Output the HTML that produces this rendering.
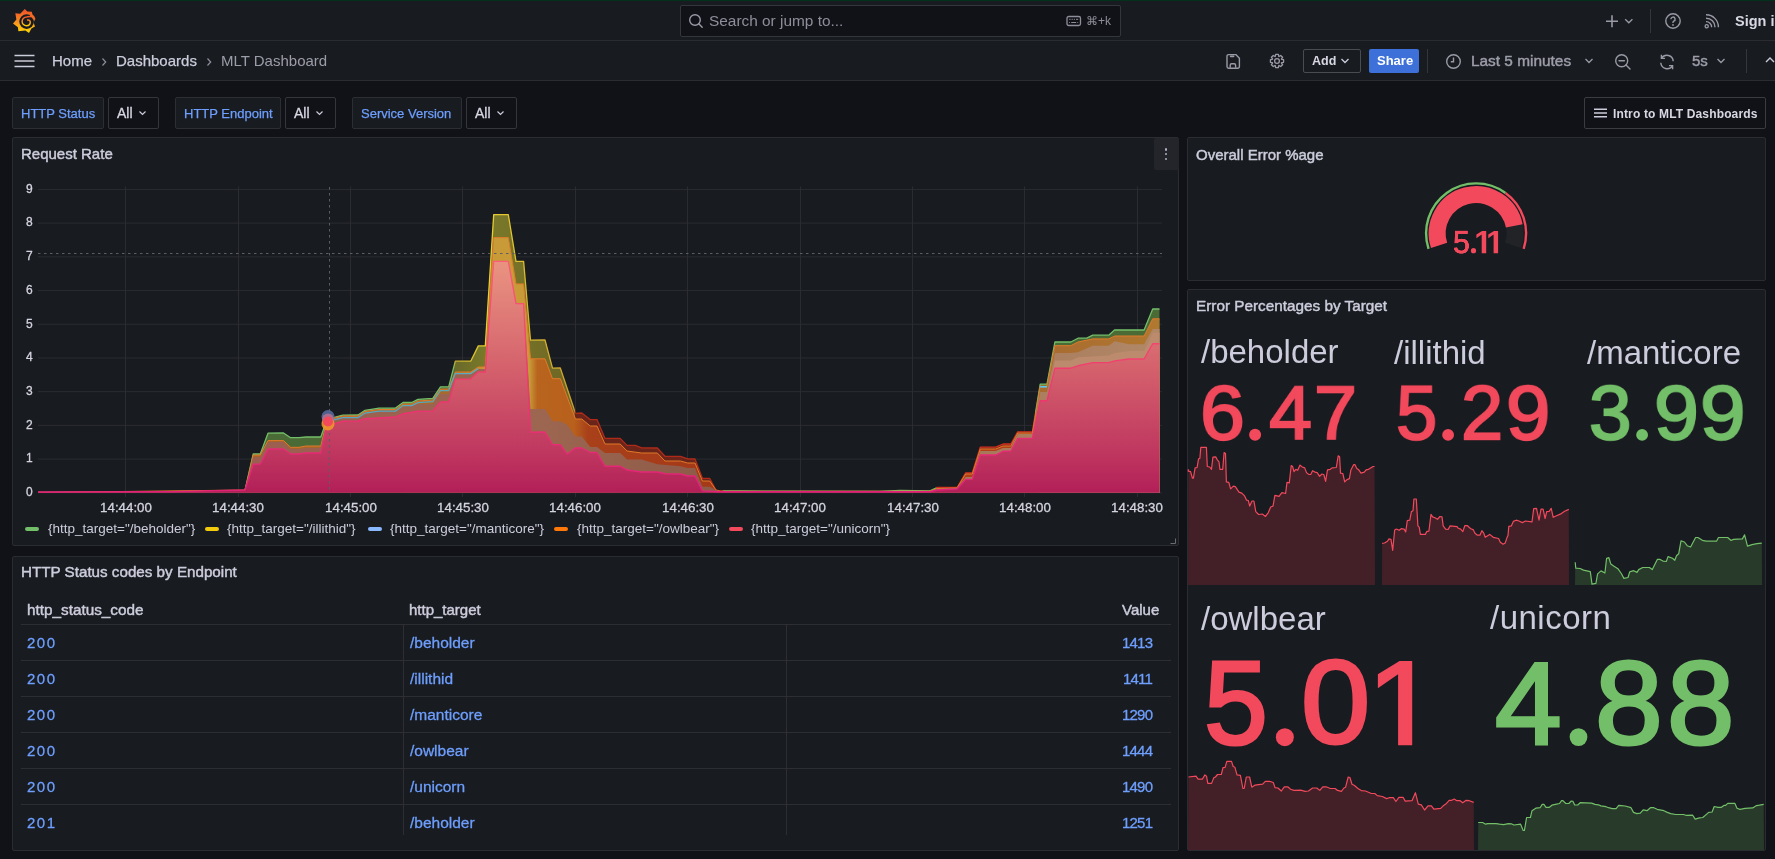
<!DOCTYPE html>
<html><head><meta charset="utf-8"><style>
html,body{margin:0;padding:0;width:1775px;height:859px;overflow:hidden;background:#111217;font-family:"Liberation Sans",sans-serif}
.t{position:absolute;line-height:1;white-space:nowrap;will-change:transform}
</style></head><body>
<div style="position:absolute;left:0px;top:0px;width:1775px;height:40px;background:#181b1f"></div>
<div style="position:absolute;left:0px;top:0px;width:1775px;height:1px;background:#03301a"></div>
<div style="position:absolute;left:0px;top:40px;width:1775px;height:1px;background:#2a2c32"></div>
<div style="position:absolute;left:0px;top:41px;width:1775px;height:39px;background:#181b1f"></div>
<div style="position:absolute;left:0px;top:80px;width:1775px;height:1px;background:#2a2c32"></div>
<svg style="position:absolute;left:8px;top:4px" width="34" height="34" viewBox="0 0 34 34">
<defs><linearGradient id="lg" x1="0" y1="0" x2="0" y2="1"><stop offset="0.1" stop-color="#f05a28"/><stop offset="0.55" stop-color="#f7931e"/><stop offset="0.9" stop-color="#fbca0a"/></linearGradient></defs>
<path fill="url(#lg)" d="M16.8 5 L19.4 7.6 L23.9 7.8 L24.6 11.4 L26.9 15.5 L25.6 18.8 L27 22.4 L23.4 24.4 L21 29 L17.4 26.6 L10.4 27.2 L9.9 23.2 L5 19.5 L8.4 15.6 L7.3 9.2 L12.2 9.8 Z"/>
<circle cx="18.6" cy="17.6" r="7.3" fill="#181b1f"/>
<path d="M25.6 14.2 C24.5 11.6 21.8 12.4 18.6 12.9 A4.5 4.5 0 0 0 14.1 17.4 A4.4 4.4 0 0 0 18.6 21.8 A3.9 3.9 0 0 0 22.3 18 A2.2 2.2 0 0 0 19.6 16" fill="none" stroke="url(#lg)" stroke-width="1.45" stroke-linecap="round"/>
<path d="M22.5 10.6 A7.6 7.6 0 0 1 26.4 15.5" fill="none" stroke="#f26a24" stroke-width="2.4"/>
</svg>
<div style="position:absolute;left:680px;top:5px;width:441px;height:32px;background:#111217;border:1px solid #34363c;border-radius:2px;box-sizing:border-box"></div>
<svg style="position:absolute;left:688px;top:13px" width="16" height="16" viewBox="0 0 16 16"><circle cx="7" cy="7" r="5.3" fill="none" stroke="#9a9aa6" stroke-width="1.4"/><path d="M10.8 10.8 L14.2 14.2" stroke="#9a9aa6" stroke-width="1.4" stroke-linecap="round"/></svg>
<div class="t" style="left:709.0px;top:13.1px;font-size:15.4px;color:#8e8e9a;font-weight:400;letter-spacing:0px;">Search or jump to...</div>
<svg style="position:absolute;left:1066px;top:15px" width="16" height="12" viewBox="0 0 16 12"><rect x="1" y="1.5" width="13.5" height="9" rx="1.8" fill="none" stroke="#8e8e9a" stroke-width="1.3"/><path d="M3.2 4.3h1.4M5.6 4.3h1.2M7.8 4.3h1.2M10 4.3h2.2M3.2 7.5h0.8M5.2 7.5h5M11.4 7.5h0.8" stroke="#8e8e9a" stroke-width="1"/></svg>
<div class="t" style="left:1086.0px;top:15.3px;font-size:12px;color:#8e8e9a;font-weight:400;letter-spacing:0px;">&#8984;+k</div>
<svg style="position:absolute;left:1604px;top:13px" width="32" height="16" viewBox="0 0 32 16"><path d="M8 2.2v12M2 8.2h12" stroke="#9a9aa6" stroke-width="1.6"/><path d="M21.2 6.2l3.6 3.6 3.6-3.6" fill="none" stroke="#9a9aa6" stroke-width="1.3"/></svg>
<div style="position:absolute;left:1650px;top:9px;width:1px;height:24px;background:#34363c"></div>
<svg style="position:absolute;left:1664px;top:12px" width="18" height="18" viewBox="0 0 18 18"><circle cx="9" cy="9" r="7.2" fill="none" stroke="#9a9aa6" stroke-width="1.4"/><path d="M6.9 7.2a2.1 2.1 0 1 1 2.9 1.9c-0.6 0.3-0.8 0.7-0.8 1.3v0.5" fill="none" stroke="#9a9aa6" stroke-width="1.4"/><circle cx="9" cy="12.9" r="0.9" fill="#9a9aa6"/></svg>
<svg style="position:absolute;left:1703px;top:13px" width="18" height="17" viewBox="0 0 18 17"><circle cx="3.7" cy="13.3" r="1.6" fill="none" stroke="#9a9aa6" stroke-width="1.3"/><path d="M3 8.6a5.4 5.4 0 0 1 5.6 5.6M3 5.2a8.8 8.8 0 0 1 9 9M3 1.8a12.2 12.2 0 0 1 12.4 12.4" fill="none" stroke="#9a9aa6" stroke-width="1.4"/></svg>
<div class="t" style="left:1735.0px;top:13.8px;font-size:14.5px;color:#d8d8e4;font-weight:700;letter-spacing:0px;">Sign in</div>
<svg style="position:absolute;left:14px;top:54px" width="21" height="14" viewBox="0 0 21 14"><path d="M0.5 1.5h20M0.5 7h20M0.5 12.5h20" stroke="#ccccdc" stroke-width="1.6"/></svg>
<div class="t" style="left:51.5px;top:53.3px;font-size:15px;color:#ccccdc;font-weight:400;letter-spacing:0px;-webkit-text-stroke:0.25px currentColor">Home</div>
<svg style="position:absolute;left:100px;top:57px" width="8" height="10" viewBox="0 0 8 10"><path d="M2.5 1.5l3.2 3.5-3.2 3.5" fill="none" stroke="#8e8e9a" stroke-width="1.2"/></svg>
<div class="t" style="left:115.5px;top:53.3px;font-size:15px;color:#ccccdc;font-weight:400;letter-spacing:0px;-webkit-text-stroke:0.25px currentColor">Dashboards</div>
<svg style="position:absolute;left:205px;top:57px" width="8" height="10" viewBox="0 0 8 10"><path d="M2.5 1.5l3.2 3.5-3.2 3.5" fill="none" stroke="#8e8e9a" stroke-width="1.2"/></svg>
<div class="t" style="left:220.5px;top:53.3px;font-size:15px;color:#9d9daa;font-weight:400;letter-spacing:0px;">MLT Dashboard</div>
<svg style="position:absolute;left:1224px;top:52px" width="18" height="18" viewBox="0 0 18 18"><path d="M3 4.2a1.6 1.6 0 0 1 1.6-1.6h7.2l3.6 3.6v8.4a1.6 1.6 0 0 1-1.6 1.6h-9.2a1.6 1.6 0 0 1-1.6-1.6z" fill="none" stroke="#9a9aa6" stroke-width="1.4" stroke-linejoin="round"/><path d="M6.2 15.8v-2.6a1.4 1.4 0 0 1 1.4-1.4h2.6a1.4 1.4 0 0 1 1.4 1.4v2.6" fill="none" stroke="#9a9aa6" stroke-width="1.4"/><path d="M6.6 4.4h3" stroke="#9a9aa6" stroke-width="1.6" stroke-linecap="round"/></svg>
<svg style="position:absolute;left:1268px;top:52px" width="18" height="18" viewBox="0 0 18 18"><path d="M7.27 4.41 L7.67 2.43 L10.33 2.43 L10.73 4.41 L11.02 4.54 L12.70 3.42 L14.58 5.30 L13.46 6.98 L13.59 7.27 L15.57 7.67 L15.57 10.33 L13.59 10.73 L13.46 11.02 L14.58 12.70 L12.70 14.58 L11.02 13.46 L10.73 13.59 L10.33 15.57 L7.67 15.57 L7.27 13.59 L6.98 13.46 L5.30 14.58 L3.42 12.70 L4.54 11.02 L4.41 10.73 L2.43 10.33 L2.43 7.67 L4.41 7.27 L4.54 6.98 L3.42 5.30 L5.30 3.42 L6.98 4.54 Z" fill="none" stroke="#9a9aa6" stroke-width="1.3" stroke-linejoin="round"/><circle cx="9" cy="9" r="2.4" fill="none" stroke="#9a9aa6" stroke-width="1.3"/></svg>
<div style="position:absolute;left:1303px;top:49px;width:58px;height:24px;border:1px solid #4a4c52;border-radius:2px;box-sizing:border-box"></div>
<div class="t" style="left:1311.5px;top:54.6px;font-size:12.5px;color:#d8d8e4;font-weight:700;letter-spacing:0px;">Add</div>
<svg style="position:absolute;left:1340px;top:57px" width="10" height="8" viewBox="0 0 10 8"><path d="M1.5 2l3.5 3.5 3.5-3.5" fill="none" stroke="#ccccdc" stroke-width="1.3"/></svg>
<div style="position:absolute;left:1369px;top:49px;width:50px;height:24px;background:#3d71d9;border-radius:2px"></div>
<div class="t" style="left:1376.5px;top:54.2px;font-size:13px;color:#ffffff;font-weight:700;letter-spacing:0px;">Share</div>
<div style="position:absolute;left:1427px;top:49px;width:1px;height:24px;background:#34363c"></div>
<svg style="position:absolute;left:1445px;top:53px" width="17" height="17" viewBox="0 0 17 17"><circle cx="8.5" cy="8.5" r="6.8" fill="none" stroke="#9a9aa6" stroke-width="1.4"/><path d="M8.5 4.5v4.2H5.8" fill="none" stroke="#9a9aa6" stroke-width="1.4"/></svg>
<div class="t" style="left:1470.5px;top:53.1px;font-size:15.4px;color:#9d9daa;font-weight:400;letter-spacing:0px;-webkit-text-stroke:0.45px currentColor">Last 5 minutes</div>
<svg style="position:absolute;left:1584px;top:57px" width="10" height="8" viewBox="0 0 10 8"><path d="M1.5 2l3.5 3.5 3.5-3.5" fill="none" stroke="#9a9aa6" stroke-width="1.3"/></svg>
<svg style="position:absolute;left:1614px;top:53px" width="18" height="18" viewBox="0 0 18 18"><circle cx="7.7" cy="7.7" r="6" fill="none" stroke="#9a9aa6" stroke-width="1.4"/><path d="M12 12l4 4M5 7.7h5.4" stroke="#9a9aa6" stroke-width="1.4" stroke-linecap="round"/></svg>
<svg style="position:absolute;left:1658px;top:53px" width="18" height="18" viewBox="0 0 18 18"><path d="M15.2 8.2A6.3 6.3 0 0 0 3.6 5.2M2.8 9.8a6.3 6.3 0 0 0 11.6 3" fill="none" stroke="#9a9aa6" stroke-width="1.4"/><path d="M3.4 1.8v3.6h3.6M14.6 16.2v-3.6H11" fill="none" stroke="#9a9aa6" stroke-width="1.4"/></svg>
<div class="t" style="left:1692.0px;top:53.4px;font-size:15px;color:#9d9daa;font-weight:400;letter-spacing:0px;-webkit-text-stroke:0.45px currentColor">5s</div>
<svg style="position:absolute;left:1716px;top:57px" width="10" height="8" viewBox="0 0 10 8"><path d="M1.5 2l3.5 3.5 3.5-3.5" fill="none" stroke="#9a9aa6" stroke-width="1.3"/></svg>
<div style="position:absolute;left:1746px;top:49px;width:1px;height:24px;background:#34363c"></div>
<svg style="position:absolute;left:1764px;top:55px" width="11" height="10" viewBox="0 0 11 10"><path d="M2 7l4-4 4 4" fill="none" stroke="#ccccdc" stroke-width="1.4"/></svg>
<div style="position:absolute;left:12px;top:97px;width:92px;height:32px;background:#181b1f;border:1px solid #2c2e34;border-radius:2px;box-sizing:border-box"></div>
<div class="t" style="left:21.0px;top:107.4px;font-size:13px;color:#6e9fff;font-weight:400;letter-spacing:0px;-webkit-text-stroke:0.25px currentColor">HTTP Status</div>
<div style="position:absolute;left:108px;top:97px;width:51px;height:32px;background:#111217;border:1px solid #34363c;border-radius:2px;box-sizing:border-box"></div>
<div class="t" style="left:116.5px;top:106.1px;font-size:14px;color:#d8d8e4;font-weight:400;letter-spacing:0px;-webkit-text-stroke:0.3px currentColor">All</div>
<svg style="position:absolute;left:138px;top:109px" width="9" height="8" viewBox="0 0 9 8"><path d="M1.5 2.5l3 3 3-3" fill="none" stroke="#ccccdc" stroke-width="1.2"/></svg>
<div style="position:absolute;left:175px;top:97px;width:106px;height:32px;background:#181b1f;border:1px solid #2c2e34;border-radius:2px;box-sizing:border-box"></div>
<div class="t" style="left:184.0px;top:107.4px;font-size:13px;color:#6e9fff;font-weight:400;letter-spacing:0px;-webkit-text-stroke:0.25px currentColor">HTTP Endpoint</div>
<div style="position:absolute;left:285px;top:97px;width:51px;height:32px;background:#111217;border:1px solid #34363c;border-radius:2px;box-sizing:border-box"></div>
<div class="t" style="left:293.5px;top:106.1px;font-size:14px;color:#d8d8e4;font-weight:400;letter-spacing:0px;-webkit-text-stroke:0.3px currentColor">All</div>
<svg style="position:absolute;left:315px;top:109px" width="9" height="8" viewBox="0 0 9 8"><path d="M1.5 2.5l3 3 3-3" fill="none" stroke="#ccccdc" stroke-width="1.2"/></svg>
<div style="position:absolute;left:352px;top:97px;width:110px;height:32px;background:#181b1f;border:1px solid #2c2e34;border-radius:2px;box-sizing:border-box"></div>
<div class="t" style="left:361.0px;top:107.4px;font-size:13px;color:#6e9fff;font-weight:400;letter-spacing:0px;-webkit-text-stroke:0.25px currentColor">Service Version</div>
<div style="position:absolute;left:466px;top:97px;width:51px;height:32px;background:#111217;border:1px solid #34363c;border-radius:2px;box-sizing:border-box"></div>
<div class="t" style="left:474.5px;top:106.1px;font-size:14px;color:#d8d8e4;font-weight:400;letter-spacing:0px;-webkit-text-stroke:0.3px currentColor">All</div>
<svg style="position:absolute;left:496px;top:109px" width="9" height="8" viewBox="0 0 9 8"><path d="M1.5 2.5l3 3 3-3" fill="none" stroke="#ccccdc" stroke-width="1.2"/></svg>
<div style="position:absolute;left:1584px;top:97px;width:182px;height:32px;background:#111217;border:1px solid #3a3c42;border-radius:2px;box-sizing:border-box"></div>
<svg style="position:absolute;left:1593px;top:107px" width="16" height="12" viewBox="0 0 16 12"><path d="M1 2.2h13M1 6h13M1 9.8h13" stroke="#ccccdc" stroke-width="1.5"/></svg>
<div class="t" style="left:1613.0px;top:107.8px;font-size:12px;color:#d8d8e4;font-weight:700;letter-spacing:0.15px;">Intro to MLT Dashboards</div>
<div style="position:absolute;left:12px;top:137px;width:1167px;height:409px;background:#181b1f;border:1px solid #2a2c32;border-radius:2px;box-sizing:border-box"></div>
<div style="position:absolute;left:1187px;top:137px;width:579px;height:144px;background:#181b1f;border:1px solid #2a2c32;border-radius:2px;box-sizing:border-box"></div>
<div style="position:absolute;left:1187px;top:289px;width:579px;height:562px;background:#181b1f;border:1px solid #2a2c32;border-radius:2px;box-sizing:border-box"></div>
<div style="position:absolute;left:12px;top:556px;width:1167px;height:295px;background:#181b1f;border:1px solid #2a2c32;border-radius:2px;box-sizing:border-box"></div>
<div class="t" style="left:20.5px;top:146.3px;font-size:15px;color:#ccccdc;font-weight:400;letter-spacing:0px;-webkit-text-stroke:0.45px currentColor">Request Rate</div>
<div class="t" style="left:1195.5px;top:146.6px;font-size:15px;color:#ccccdc;font-weight:400;letter-spacing:0px;-webkit-text-stroke:0.45px currentColor">Overall Error %age</div>
<div class="t" style="left:1196.0px;top:298.1px;font-size:15.3px;color:#ccccdc;font-weight:400;letter-spacing:0px;-webkit-text-stroke:0.45px currentColor">Error Percentages by Target</div>
<div class="t" style="left:20.5px;top:564.2px;font-size:15.2px;color:#ccccdc;font-weight:400;letter-spacing:0px;-webkit-text-stroke:0.45px currentColor">HTTP Status codes by Endpoint</div>
<svg style="position:absolute;left:1169px;top:537px" width="8" height="8"><path d="M6.5 1.5V6.5H1.5" fill="none" stroke="#6a6c74" stroke-width="1"/></svg>
<div style="position:absolute;left:1154px;top:138px;width:25px;height:32px;background:#23252b;border-radius:2px"></div>
<div style="position:absolute;left:1164.8px;top:148.2px;width:2.4px;height:2.4px;background:#b0b0c0;border-radius:50%"></div>
<div style="position:absolute;left:1164.8px;top:152.9px;width:2.4px;height:2.4px;background:#b0b0c0;border-radius:50%"></div>
<div style="position:absolute;left:1164.8px;top:157.6px;width:2.4px;height:2.4px;background:#b0b0c0;border-radius:50%"></div>
<svg style="position:absolute;left:0;top:0" width="1775" height="859" viewBox="0 0 1775 859"><path d="M38 492.80H1162" stroke="#2a2c31" stroke-width="1"/><path d="M38 459.09H1162" stroke="#2a2c31" stroke-width="1"/><path d="M38 425.38H1162" stroke="#2a2c31" stroke-width="1"/><path d="M38 391.67H1162" stroke="#2a2c31" stroke-width="1"/><path d="M38 357.96H1162" stroke="#2a2c31" stroke-width="1"/><path d="M38 324.25H1162" stroke="#2a2c31" stroke-width="1"/><path d="M38 290.54H1162" stroke="#2a2c31" stroke-width="1"/><path d="M38 256.83H1162" stroke="#2a2c31" stroke-width="1"/><path d="M38 223.12H1162" stroke="#2a2c31" stroke-width="1"/><path d="M38 189.41H1162" stroke="#2a2c31" stroke-width="1"/><path d="M125.5 186.5V497" stroke="#2a2c31" stroke-width="1"/><path d="M238.5 186.5V497" stroke="#2a2c31" stroke-width="1"/><path d="M350.5 186.5V497" stroke="#2a2c31" stroke-width="1"/><path d="M462.5 186.5V497" stroke="#2a2c31" stroke-width="1"/><path d="M575.5 186.5V497" stroke="#2a2c31" stroke-width="1"/><path d="M687.5 186.5V497" stroke="#2a2c31" stroke-width="1"/><path d="M800.5 186.5V497" stroke="#2a2c31" stroke-width="1"/><path d="M912.5 186.5V497" stroke="#2a2c31" stroke-width="1"/><path d="M1024.5 186.5V497" stroke="#2a2c31" stroke-width="1"/><path d="M1137.5 186.5V497" stroke="#2a2c31" stroke-width="1"/><defs>
<linearGradient id="gTop" gradientUnits="userSpaceOnUse" x1="38" y1="0" x2="1160" y2="0">
 <stop offset="0" stop-color="#4a6a36"/><stop offset="0.37" stop-color="#4a6a36"/><stop offset="0.372" stop-color="#6a6a2a"/>
 <stop offset="0.4" stop-color="#7a7a2a"/><stop offset="0.478" stop-color="#6e6524"/><stop offset="0.479" stop-color="#6a2419"/>
 <stop offset="0.61" stop-color="#6a2419"/><stop offset="0.611" stop-color="#4a6a36"/><stop offset="0.8" stop-color="#4a6a36"/><stop offset="0.801" stop-color="#7a2418"/><stop offset="0.888" stop-color="#7a2418"/><stop offset="0.889" stop-color="#4a6a36"/><stop offset="1" stop-color="#4a6a36"/></linearGradient>
<linearGradient id="gTopS" gradientUnits="userSpaceOnUse" x1="38" y1="0" x2="1160" y2="0">
 <stop offset="0" stop-color="#73bf69"/><stop offset="0.37" stop-color="#73bf69"/><stop offset="0.372" stop-color="#c8b030"/>
 <stop offset="0.4" stop-color="#e8d030"/><stop offset="0.478" stop-color="#c8a030"/><stop offset="0.479" stop-color="#b02a1a"/>
 <stop offset="0.61" stop-color="#b02a1a"/><stop offset="0.611" stop-color="#73bf69"/><stop offset="0.8" stop-color="#73bf69"/><stop offset="0.801" stop-color="#d0301e"/><stop offset="0.888" stop-color="#d0301e"/><stop offset="0.889" stop-color="#73bf69"/><stop offset="1" stop-color="#73bf69"/></linearGradient>
<linearGradient id="gOr" gradientUnits="userSpaceOnUse" x1="38" y1="0" x2="1160" y2="0">
 <stop offset="0" stop-color="#a85a28"/><stop offset="0.37" stop-color="#a86a2a"/><stop offset="0.4" stop-color="#c89a38"/><stop offset="0.438" stop-color="#c89a38"/>
 <stop offset="0.445" stop-color="#b8641e"/><stop offset="0.478" stop-color="#b8601c"/><stop offset="0.49" stop-color="#a8401a"/><stop offset="0.61" stop-color="#a43818"/>
 <stop offset="0.8" stop-color="#a43818"/><stop offset="0.801" stop-color="#b0401a"/><stop offset="0.888" stop-color="#b0401a"/><stop offset="0.889" stop-color="#a86a30"/><stop offset="1" stop-color="#b07830"/></linearGradient>
<linearGradient id="gTan" gradientUnits="userSpaceOnUse" x1="38" y1="0" x2="1160" y2="0">
 <stop offset="0" stop-color="#9a5a50"/><stop offset="0.45" stop-color="#9c6650"/><stop offset="0.61" stop-color="#8c5a48"/><stop offset="0.85" stop-color="#a87a5a"/><stop offset="1" stop-color="#b08868"/></linearGradient>
<linearGradient id="gPinkS" gradientUnits="userSpaceOnUse" x1="0" y1="214" x2="0" y2="493"><stop offset="0" stop-color="#ff6a7c"/><stop offset="0.6" stop-color="#f03a6c"/><stop offset="1" stop-color="#e2207a"/></linearGradient>
<linearGradient id="gPink" gradientUnits="userSpaceOnUse" x1="0" y1="214" x2="0" y2="493">
 <stop offset="0" stop-color="#f0a282"/><stop offset="0.2" stop-color="#e89080"/><stop offset="0.56" stop-color="#d4606c"/><stop offset="0.846" stop-color="#c03860"/><stop offset="1" stop-color="#b21f58"/></linearGradient>
</defs><polygon points="38.0,492.4 172.0,492.0 225.0,490.8 245.0,490.3 253.2,454.0 260.3,454.0 268.0,433.2 283.5,433.0 290.6,437.7 299.0,437.7 306.0,437.0 320.8,437.0 327.0,419.4 342.7,415.2 358.0,415.0 365.0,410.3 379.0,408.2 395.5,408.0 403.0,402.5 411.7,402.5 418.0,399.3 432.8,398.3 440.5,386.8 448.7,386.8 455.3,361.2 470.7,361.2 478.3,345.9 485.3,345.9 493.7,214.6 508.3,214.6 516.0,261.4 523.6,261.4 530.5,340.2 545.0,340.0 552.5,368.2 560.3,368.0 575.5,413.3 581.8,413.0 590.2,419.6 597.0,419.6 605.0,438.4 620.2,438.4 627.0,445.4 635.3,445.4 641.6,447.9 657.3,448.0 665.0,456.3 680.4,456.3 687.7,458.8 695.0,459.0 702.4,478.3 709.7,478.3 716.0,490.2 720.0,491.0 740.0,491.0 880.0,491.5 900.0,490.5 930.0,490.8 937.0,487.5 957.1,487.5 965.7,472.8 972.3,472.8 980.3,447.2 995.7,447.2 1003.0,444.0 1010.9,444.0 1017.7,431.8 1032.4,431.8 1040.2,384.1 1047.0,384.0 1054.9,342.0 1070.8,342.0 1078.0,338.2 1086.7,338.2 1092.8,335.2 1108.7,335.2 1114.8,329.8 1144.1,330.0 1152.7,309.0 1159.5,309.0 1159.5,492.7 38.0,492.7" fill="url(#gTop)"/><polyline points="38.0,492.4 172.0,492.0 225.0,490.8 245.0,490.3 253.2,454.0 260.3,454.0 268.0,433.2 283.5,433.0 290.6,437.7 299.0,437.7 306.0,437.0 320.8,437.0 327.0,419.4 342.7,415.2 358.0,415.0 365.0,410.3 379.0,408.2 395.5,408.0 403.0,402.5 411.7,402.5 418.0,399.3 432.8,398.3 440.5,386.8 448.7,386.8 455.3,361.2 470.7,361.2 478.3,345.9 485.3,345.9 493.7,214.6 508.3,214.6 516.0,261.4 523.6,261.4 530.5,340.2 545.0,340.0 552.5,368.2 560.3,368.0 575.5,413.3 581.8,413.0 590.2,419.6 597.0,419.6 605.0,438.4 620.2,438.4 627.0,445.4 635.3,445.4 641.6,447.9 657.3,448.0 665.0,456.3 680.4,456.3 687.7,458.8 695.0,459.0 702.4,478.3 709.7,478.3 716.0,490.2 720.0,491.0 740.0,491.0 880.0,491.5 900.0,490.5 930.0,490.8 937.0,487.5 957.1,487.5 965.7,472.8 972.3,472.8 980.3,447.2 995.7,447.2 1003.0,444.0 1010.9,444.0 1017.7,431.8 1032.4,431.8 1040.2,384.1 1047.0,384.0 1054.9,342.0 1070.8,342.0 1078.0,338.2 1086.7,338.2 1092.8,335.2 1108.7,335.2 1114.8,329.8 1144.1,330.0 1152.7,309.0 1159.5,309.0" fill="none" stroke="url(#gTopS)" stroke-width="1.3" stroke-linejoin="round"/><polygon points="38.0,492.5 245.0,490.0 253.2,455.0 260.3,455.0 268.0,440.6 283.5,440.6 290.6,447.3 299.0,447.3 306.0,446.0 320.8,446.0 327.0,420.0 342.7,416.0 358.0,416.0 365.0,411.5 379.0,409.5 395.5,409.5 403.0,404.0 411.7,404.0 418.0,401.0 432.8,400.0 440.5,389.0 448.7,389.0 455.3,372.0 470.7,372.0 478.3,367.0 485.3,367.0 493.7,237.6 508.3,237.6 516.0,283.9 523.6,283.9 530.5,358.8 545.0,358.8 552.5,378.7 560.3,378.7 575.5,419.0 581.8,419.0 590.2,426.0 597.0,426.0 605.0,444.0 620.2,444.0 627.0,451.0 641.6,453.0 657.3,453.0 665.0,461.0 680.4,461.0 687.7,463.0 695.0,463.0 702.4,481.0 709.7,481.0 716.0,490.0 720.0,491.2 930.0,491.2 937.0,488.5 957.0,488.0 965.7,474.0 972.3,474.0 980.3,449.0 995.7,449.0 1003.0,446.0 1010.9,446.0 1017.7,433.0 1032.4,433.0 1040.2,386.0 1047.0,386.0 1054.9,345.7 1070.8,345.7 1078.0,342.0 1092.8,338.9 1108.7,338.9 1114.8,336.0 1144.1,336.0 1152.7,318.8 1159.5,318.8 1159.5,492.7 38.0,492.7" fill="url(#gOr)"/><polyline points="38.0,492.5 245.0,490.0 253.2,455.0 260.3,455.0 268.0,440.6 283.5,440.6 290.6,447.3 299.0,447.3 306.0,446.0 320.8,446.0 327.0,420.0 342.7,416.0 358.0,416.0 365.0,411.5 379.0,409.5 395.5,409.5 403.0,404.0 411.7,404.0 418.0,401.0 432.8,400.0 440.5,389.0 448.7,389.0 455.3,372.0 470.7,372.0 478.3,367.0 485.3,367.0 493.7,237.6 508.3,237.6 516.0,283.9 523.6,283.9 530.5,358.8 545.0,358.8 552.5,378.7 560.3,378.7 575.5,419.0 581.8,419.0 590.2,426.0 597.0,426.0 605.0,444.0 620.2,444.0 627.0,451.0 641.6,453.0 657.3,453.0 665.0,461.0 680.4,461.0 687.7,463.0 695.0,463.0 702.4,481.0 709.7,481.0 716.0,490.0 720.0,491.2 930.0,491.2 937.0,488.5 957.0,488.0 965.7,474.0 972.3,474.0 980.3,449.0 995.7,449.0 1003.0,446.0 1010.9,446.0 1017.7,433.0 1032.4,433.0 1040.2,386.0 1047.0,386.0 1054.9,345.7 1070.8,345.7 1078.0,342.0 1092.8,338.9 1108.7,338.9 1114.8,336.0 1144.1,336.0 1152.7,318.8 1159.5,318.8" fill="none" stroke="#e07a2a" stroke-width="1.0" stroke-linejoin="round"/><polygon points="38.0,492.7 245.0,490.5 253.2,457.0 260.3,457.0 268.0,442.0 283.5,442.0 290.6,449.0 299.0,449.0 306.0,448.0 320.8,448.0 327.0,421.0 342.7,417.0 358.0,417.0 365.0,413.0 379.0,411.0 395.5,411.0 403.0,407.0 418.0,404.0 432.8,404.0 440.5,394.0 448.7,394.0 455.3,374.0 470.7,374.0 478.3,369.0 485.3,369.0 493.7,261.4 508.3,261.4 516.0,303.6 523.6,303.6 530.5,409.0 545.0,409.0 552.5,421.3 560.3,421.3 567.2,424.8 575.5,436.4 581.8,436.4 590.2,447.0 597.0,447.0 605.0,453.0 620.2,453.0 627.0,459.4 641.6,459.4 657.3,464.2 680.4,466.3 687.7,468.0 695.0,468.0 702.4,486.7 709.7,486.7 716.0,490.0 720.0,491.5 930.0,491.5 937.0,489.0 957.0,488.0 965.7,477.0 972.3,477.0 980.3,451.0 995.7,451.0 1003.0,448.0 1010.9,448.0 1017.7,434.0 1032.4,434.0 1040.2,392.0 1047.0,392.0 1054.9,353.0 1070.8,353.0 1078.0,352.3 1092.8,345.7 1108.7,345.7 1114.8,341.3 1129.0,344.3 1144.1,344.3 1152.7,329.0 1159.5,329.0 1159.5,492.7 38.0,492.7" fill="url(#gTan)"/><polyline points="327.0,421.6 342.7,417.6 358.0,417.6 365.0,413.1 379.0,411.1 395.5,411.1 403.0,405.6 411.7,405.6 418.0,402.6 432.8,401.6 440.5,390.6 448.7,390.6 455.3,373.6 470.7,373.6 478.3,368.6" fill="none" stroke="#4ab4d8" stroke-width="1.2" opacity="0.85"/><polyline points="1040.2,386.8 1047,386.8" fill="none" stroke="#5ac8f0" stroke-width="1.6"/><polygon points="1040.2,400.7 1047.0,400.7 1054.9,360.4 1070.8,360.4 1078.0,357.2 1108.7,355.5 1114.8,353.0 1129.0,351.0 1144.1,351.0 1152.7,332.8 1159.5,332.8 1159.5,492.7 1040.2,492.7" fill="#bc8a6c"/><polygon points="38.0,492.0 172.0,491.6 225.0,490.4 245.0,490.0 253.2,464.2 260.3,464.0 268.0,449.0 283.5,449.0 290.6,454.0 299.0,454.0 306.0,453.0 320.8,453.0 327.0,425.8 342.7,421.3 358.0,421.0 365.0,418.7 379.0,418.0 395.5,417.0 403.0,413.8 418.0,411.3 432.8,411.0 440.5,402.0 448.7,402.0 455.3,379.1 470.7,379.1 478.3,372.0 485.3,372.0 493.7,261.4 508.3,261.4 516.0,303.6 523.6,303.6 530.5,432.2 545.0,432.0 552.5,444.7 560.3,444.7 567.2,454.2 575.5,447.9 581.8,448.0 590.2,452.5 597.0,452.5 605.0,466.3 620.2,466.3 627.0,470.0 641.6,472.0 657.3,472.0 665.0,473.7 680.4,474.0 687.7,476.0 695.0,476.0 702.4,490.9 720.0,491.8 930.0,491.8 937.0,490.0 957.0,489.0 965.7,479.4 972.3,479.4 980.3,455.0 995.7,455.0 1003.0,451.3 1010.9,451.0 1017.7,438.4 1032.4,438.4 1040.2,400.7 1047.0,400.7 1054.9,368.2 1070.8,368.2 1078.0,365.8 1092.8,362.6 1108.7,362.6 1114.8,360.9 1129.0,359.0 1144.1,359.0 1152.7,343.8 1159.5,343.8 1159.5,492.7 38.0,492.7" fill="url(#gPink)"/><polyline points="38.0,492.0 172.0,491.6 225.0,490.4 245.0,490.0 253.2,464.2 260.3,464.0 268.0,449.0 283.5,449.0 290.6,454.0 299.0,454.0 306.0,453.0 320.8,453.0 327.0,425.8 342.7,421.3 358.0,421.0 365.0,418.7 379.0,418.0 395.5,417.0 403.0,413.8 418.0,411.3 432.8,411.0 440.5,402.0 448.7,402.0 455.3,379.1 470.7,379.1 478.3,372.0 485.3,372.0 493.7,261.4 508.3,261.4 516.0,303.6 523.6,303.6 530.5,432.2 545.0,432.0 552.5,444.7 560.3,444.7 567.2,454.2 575.5,447.9 581.8,448.0 590.2,452.5 597.0,452.5 605.0,466.3 620.2,466.3 627.0,470.0 641.6,472.0 657.3,472.0 665.0,473.7 680.4,474.0 687.7,476.0 695.0,476.0 702.4,490.9 720.0,491.8 930.0,491.8 937.0,490.0 957.0,489.0 965.7,479.4 972.3,479.4 980.3,455.0 995.7,455.0 1003.0,451.3 1010.9,451.0 1017.7,438.4 1032.4,438.4 1040.2,400.7 1047.0,400.7 1054.9,368.2 1070.8,368.2 1078.0,365.8 1092.8,362.6 1108.7,362.6 1114.8,360.9 1129.0,359.0 1144.1,359.0 1152.7,343.8 1159.5,343.8" fill="none" stroke="url(#gPinkS)" stroke-width="1.4" stroke-linejoin="round"/><path d="M329.5 187V493" stroke="#5c5e66" stroke-width="1" stroke-dasharray="2.5 3.5"/><path d="M38 253.5H1162" stroke="#5c5e66" stroke-width="1" stroke-dasharray="2.5 3.5"/><circle cx="328" cy="416.5" r="6.5" fill="#56689a" opacity="0.9"/><circle cx="328" cy="419.5" r="6" fill="#c07090" opacity="0.8"/><circle cx="328" cy="424" r="6.5" fill="#f0962a" opacity="0.9"/><circle cx="328" cy="421.5" r="5" fill="#f2495c"/></svg>
<div class="t" style="right:1742.5px;top:486.0px;font-size:12px;color:#d4d4e0;font-weight:400;letter-spacing:0px;-webkit-text-stroke:0.3px currentColor">0</div>
<div class="t" style="right:1742.5px;top:452.3px;font-size:12px;color:#d4d4e0;font-weight:400;letter-spacing:0px;-webkit-text-stroke:0.3px currentColor">1</div>
<div class="t" style="right:1742.5px;top:418.6px;font-size:12px;color:#d4d4e0;font-weight:400;letter-spacing:0px;-webkit-text-stroke:0.3px currentColor">2</div>
<div class="t" style="right:1742.5px;top:384.9px;font-size:12px;color:#d4d4e0;font-weight:400;letter-spacing:0px;-webkit-text-stroke:0.3px currentColor">3</div>
<div class="t" style="right:1742.5px;top:351.2px;font-size:12px;color:#d4d4e0;font-weight:400;letter-spacing:0px;-webkit-text-stroke:0.3px currentColor">4</div>
<div class="t" style="right:1742.5px;top:317.5px;font-size:12px;color:#d4d4e0;font-weight:400;letter-spacing:0px;-webkit-text-stroke:0.3px currentColor">5</div>
<div class="t" style="right:1742.5px;top:283.8px;font-size:12px;color:#d4d4e0;font-weight:400;letter-spacing:0px;-webkit-text-stroke:0.3px currentColor">6</div>
<div class="t" style="right:1742.5px;top:250.1px;font-size:12px;color:#d4d4e0;font-weight:400;letter-spacing:0px;-webkit-text-stroke:0.3px currentColor">7</div>
<div class="t" style="right:1742.5px;top:216.4px;font-size:12px;color:#d4d4e0;font-weight:400;letter-spacing:0px;-webkit-text-stroke:0.3px currentColor">8</div>
<div class="t" style="right:1742.5px;top:182.7px;font-size:12px;color:#d4d4e0;font-weight:400;letter-spacing:0px;-webkit-text-stroke:0.3px currentColor">9</div>
<div class="t" style="left:125.8px;transform:translateX(-50%);top:500.5px;font-size:13.3px;color:#d4d4e0;font-weight:400;letter-spacing:0px;-webkit-text-stroke:0.3px currentColor">14:44:00</div>
<div class="t" style="left:238.2px;transform:translateX(-50%);top:500.5px;font-size:13.3px;color:#d4d4e0;font-weight:400;letter-spacing:0px;-webkit-text-stroke:0.3px currentColor">14:44:30</div>
<div class="t" style="left:350.6px;transform:translateX(-50%);top:500.5px;font-size:13.3px;color:#d4d4e0;font-weight:400;letter-spacing:0px;-webkit-text-stroke:0.3px currentColor">14:45:00</div>
<div class="t" style="left:463.0px;transform:translateX(-50%);top:500.5px;font-size:13.3px;color:#d4d4e0;font-weight:400;letter-spacing:0px;-webkit-text-stroke:0.3px currentColor">14:45:30</div>
<div class="t" style="left:575.4px;transform:translateX(-50%);top:500.5px;font-size:13.3px;color:#d4d4e0;font-weight:400;letter-spacing:0px;-webkit-text-stroke:0.3px currentColor">14:46:00</div>
<div class="t" style="left:687.8px;transform:translateX(-50%);top:500.5px;font-size:13.3px;color:#d4d4e0;font-weight:400;letter-spacing:0px;-webkit-text-stroke:0.3px currentColor">14:46:30</div>
<div class="t" style="left:800.2px;transform:translateX(-50%);top:500.5px;font-size:13.3px;color:#d4d4e0;font-weight:400;letter-spacing:0px;-webkit-text-stroke:0.3px currentColor">14:47:00</div>
<div class="t" style="left:912.6px;transform:translateX(-50%);top:500.5px;font-size:13.3px;color:#d4d4e0;font-weight:400;letter-spacing:0px;-webkit-text-stroke:0.3px currentColor">14:47:30</div>
<div class="t" style="left:1025.0px;transform:translateX(-50%);top:500.5px;font-size:13.3px;color:#d4d4e0;font-weight:400;letter-spacing:0px;-webkit-text-stroke:0.3px currentColor">14:48:00</div>
<div class="t" style="left:1137.4px;transform:translateX(-50%);top:500.5px;font-size:13.3px;color:#d4d4e0;font-weight:400;letter-spacing:0px;-webkit-text-stroke:0.3px currentColor">14:48:30</div>
<div style="position:absolute;left:25px;top:527px;width:14px;height:4px;background:#73bf69;border-radius:2px"></div>
<div class="t" style="left:47.5px;top:521.8px;font-size:13.5px;color:#ccccdc;font-weight:400;letter-spacing:0px;">{http_target="/beholder"}</div>
<div style="position:absolute;left:205px;top:527px;width:14px;height:4px;background:#f2cc0c;border-radius:2px"></div>
<div class="t" style="left:227.0px;top:521.8px;font-size:13.5px;color:#ccccdc;font-weight:400;letter-spacing:0px;">{http_target="/illithid"}</div>
<div style="position:absolute;left:368px;top:527px;width:14px;height:4px;background:#8ab8ff;border-radius:2px"></div>
<div class="t" style="left:390.0px;top:521.8px;font-size:13.5px;color:#ccccdc;font-weight:400;letter-spacing:0px;">{http_target="/manticore"}</div>
<div style="position:absolute;left:554px;top:527px;width:14px;height:4px;background:#ff780a;border-radius:2px"></div>
<div class="t" style="left:576.5px;top:521.8px;font-size:13.5px;color:#ccccdc;font-weight:400;letter-spacing:0px;">{http_target="/owlbear"}</div>
<div style="position:absolute;left:729px;top:527px;width:14px;height:4px;background:#f2495c;border-radius:2px"></div>
<div class="t" style="left:751.0px;top:521.8px;font-size:13.5px;color:#ccccdc;font-weight:400;letter-spacing:0px;">{http_target="/unicorn"}</div>
<svg style="position:absolute;left:0;top:0" width="1775" height="859"><path d="M1439.10 245.42 A38.9 38.9 0 1 1 1513.10 245.42" fill="none" stroke="#222327" stroke-width="17"/><path d="M1439.10 245.42 A38.9 38.9 0 1 1 1514.29 225.98" fill="none" stroke="#f2495c" stroke-width="17"/><path d="M1428.55 248.85 A50 50 0 0 1 1505.49 192.95" fill="none" stroke="#73bf69" stroke-width="2.4"/><path d="M1505.49 192.95 A50 50 0 0 1 1523.65 248.85" fill="none" stroke="#f2495c" stroke-width="2.4"/></svg>
<div class="t" style="left:1200.18px;top:374.24px;font-size:100px;color:#f2495c;-webkit-text-stroke:2.6px #f2495c;transform-origin:0 0;transform:scale(0.8061,0.7685)">6</div>
<div class="t" style="left:1269.43px;top:375.32px;font-size:100px;color:#f2495c;-webkit-text-stroke:2.6px #f2495c;transform-origin:0 0;transform:scale(0.7717,0.7556)">4</div>
<div class="t" style="left:1313.70px;top:375.32px;font-size:100px;color:#f2495c;-webkit-text-stroke:2.6px #f2495c;transform-origin:0 0;transform:scale(0.7750,0.7556)">7</div>
<div class="t" style="left:1395.67px;top:374.40px;font-size:100px;color:#f2495c;-webkit-text-stroke:2.6px #f2495c;transform-origin:0 0;transform:scale(0.7420,0.7667)">5</div>
<div class="t" style="left:1460.77px;top:374.27px;font-size:100px;color:#f2495c;-webkit-text-stroke:2.6px #f2495c;transform-origin:0 0;transform:scale(0.7583,0.7667)">2</div>
<div class="t" style="left:1505.61px;top:374.24px;font-size:100px;color:#f2495c;-webkit-text-stroke:2.6px #f2495c;transform-origin:0 0;transform:scale(0.7980,0.7685)">9</div>
<div class="t" style="left:1588.77px;top:374.26px;font-size:100px;color:#73bf69;-webkit-text-stroke:2.6px #73bf69;transform-origin:0 0;transform:scale(0.7647,0.7671)">3</div>
<div class="t" style="left:1653.68px;top:374.26px;font-size:100px;color:#73bf69;-webkit-text-stroke:2.6px #73bf69;transform-origin:0 0;transform:scale(0.8061,0.7671)">9</div>
<div class="t" style="left:1699.54px;top:374.26px;font-size:100px;color:#73bf69;-webkit-text-stroke:2.6px #73bf69;transform-origin:0 0;transform:scale(0.8184,0.7671)">9</div>
<div class="t" style="left:1204.26px;top:643.15px;font-size:100px;color:#f2495c;-webkit-text-stroke:2.6px #f2495c;transform-origin:0 0;transform:scale(1.1480,1.1833)">5</div>
<div class="t" style="left:1301.37px;top:643.39px;font-size:100px;color:#f2495c;-webkit-text-stroke:2.6px #f2495c;transform-origin:0 0;transform:scale(1.2440,1.1795)">0</div>
<div class="t" style="left:1494.50px;top:644.17px;font-size:100px;color:#73bf69;-webkit-text-stroke:2.6px #73bf69;transform-origin:0 0;transform:scale(1.1962,1.1736)">4</div>
<div class="t" style="left:1594.95px;top:643.29px;font-size:100px;color:#73bf69;-webkit-text-stroke:2.6px #73bf69;transform-origin:0 0;transform:scale(1.2180,1.1863)">8</div>
<div class="t" style="left:1667.16px;top:643.29px;font-size:100px;color:#73bf69;-webkit-text-stroke:2.6px #73bf69;transform-origin:0 0;transform:scale(1.2120,1.1863)">8</div>
<div class="t" style="left:1452.89px;top:226.25px;font-size:100px;color:#f2495c;-webkit-text-stroke:2.6px #f2495c;transform-origin:0 0;transform:scale(0.3020,0.3167)">5</div>
<svg style="position:absolute;left:0;top:0" width="1775" height="859"><polygon points="1482.08,231.00 1486.20,231.00 1486.20,253.20 1481.70,253.20 1481.70,234.51 1476.37,238.19 1476.37,234.51" fill="#f2495c"/><polygon points="1493.98,231.00 1498.10,231.00 1498.10,253.20 1493.60,253.20 1493.60,234.51 1488.27,238.19 1488.27,234.51" fill="#f2495c"/><polygon points="1399.53,660.90 1412.20,660.90 1412.20,745.20 1398.10,745.20 1398.10,674.22 1377.87,688.21 1377.87,674.22" fill="#f2495c"/><circle cx="1255.1" cy="434.85" r="6" fill="#f2495c"/><circle cx="1448.1" cy="434.9" r="5.9" fill="#f2495c"/><circle cx="1642.1" cy="434.9" r="5.9" fill="#73bf69"/><circle cx="1284.85" cy="737.2" r="9" fill="#f2495c"/><circle cx="1578.5" cy="737.1" r="8.9" fill="#73bf69"/><circle cx="1473.5" cy="250.7" r="2.6" fill="#f2495c"/></svg>
<svg style="position:absolute;left:0;top:0" width="1775" height="859"><polygon points="1188,585 1188.3,469.3 1188.3,471.2 1190.6,471.7 1192.4,478.2 1193.4,478.2 1195.1,467.9 1197.1,467.5 1198.5,459.1 1199.9,458.2 1200.8,447.4 1206.4,447.4 1207.3,466.5 1209.7,467.0 1211.5,469.3 1212.9,457.2 1215.7,456.8 1217.1,459.6 1219.0,461.9 1219.9,469.3 1222.7,469.3 1224.1,452.6 1225.5,453.5 1226.4,481.9 1228.8,482.4 1230.6,488.9 1233.4,486.1 1235.3,486.6 1239.0,492.1 1241.8,493.1 1244.6,495.9 1246.5,500.1 1248.3,500.5 1249.7,506.1 1252.0,501.0 1253.9,501.0 1255.8,511.7 1258.6,514.5 1262.3,514.0 1265.5,516.4 1268.3,512.6 1270.7,507.0 1273.0,506.1 1274.9,495.4 1279.0,496.3 1281.9,492.6 1285.6,493.5 1287.0,482.4 1289.3,482.8 1291.2,465.6 1292.6,466.5 1294.0,471.7 1295.8,469.3 1297.7,470.3 1300.0,465.1 1302.3,467.0 1304.7,467.9 1306.5,472.6 1308.9,474.5 1310.7,474.5 1312.6,470.7 1314.9,472.1 1317.2,472.6 1319.6,476.3 1321.9,474.0 1323.8,474.5 1325.6,481.4 1327.5,469.8 1330.3,469.3 1332.1,467.9 1336.3,467.5 1338.2,455.8 1339.6,456.8 1340.5,473.1 1342.8,473.5 1344.7,481.9 1347.0,479.6 1349.4,478.6 1350.8,470.3 1353.6,464.7 1355.0,464.7 1356.8,468.4 1358.7,469.8 1361.0,473.1 1364.3,472.1 1366.1,469.8 1368.5,469.3 1373.1,466.5 1374.5,466.5 1375,585" fill="#432027"/><polyline points="1188.3,469.3 1188.3,471.2 1190.6,471.7 1192.4,478.2 1193.4,478.2 1195.1,467.9 1197.1,467.5 1198.5,459.1 1199.9,458.2 1200.8,447.4 1206.4,447.4 1207.3,466.5 1209.7,467.0 1211.5,469.3 1212.9,457.2 1215.7,456.8 1217.1,459.6 1219.0,461.9 1219.9,469.3 1222.7,469.3 1224.1,452.6 1225.5,453.5 1226.4,481.9 1228.8,482.4 1230.6,488.9 1233.4,486.1 1235.3,486.6 1239.0,492.1 1241.8,493.1 1244.6,495.9 1246.5,500.1 1248.3,500.5 1249.7,506.1 1252.0,501.0 1253.9,501.0 1255.8,511.7 1258.6,514.5 1262.3,514.0 1265.5,516.4 1268.3,512.6 1270.7,507.0 1273.0,506.1 1274.9,495.4 1279.0,496.3 1281.9,492.6 1285.6,493.5 1287.0,482.4 1289.3,482.8 1291.2,465.6 1292.6,466.5 1294.0,471.7 1295.8,469.3 1297.7,470.3 1300.0,465.1 1302.3,467.0 1304.7,467.9 1306.5,472.6 1308.9,474.5 1310.7,474.5 1312.6,470.7 1314.9,472.1 1317.2,472.6 1319.6,476.3 1321.9,474.0 1323.8,474.5 1325.6,481.4 1327.5,469.8 1330.3,469.3 1332.1,467.9 1336.3,467.5 1338.2,455.8 1339.6,456.8 1340.5,473.1 1342.8,473.5 1344.7,481.9 1347.0,479.6 1349.4,478.6 1350.8,470.3 1353.6,464.7 1355.0,464.7 1356.8,468.4 1358.7,469.8 1361.0,473.1 1364.3,472.1 1366.1,469.8 1368.5,469.3 1373.1,466.5 1374.5,466.5" fill="none" stroke="#f2495c" stroke-width="1.2" stroke-linejoin="round"/><polygon points="1382,585 1382.1,543.4 1384.5,543.0 1387.4,541.3 1389.0,538.9 1391.0,539.3 1392.7,550.3 1394.7,529.9 1396.3,529.0 1399.2,530.3 1401.2,528.7 1404.1,529.1 1405.7,532.0 1407.3,520.6 1409.8,520.2 1411.4,511.6 1413.0,510.8 1413.9,499.0 1416.3,499.0 1417.9,525.9 1419.2,527.1 1420.4,534.4 1425.3,534.4 1426.9,531.4 1428.9,531.2 1431.0,514.4 1432.6,516.9 1435.0,517.7 1437.5,519.3 1439.9,516.5 1442.0,516.9 1443.2,525.9 1445.6,529.1 1448.1,529.5 1450.1,525.9 1457.1,526.7 1458.3,528.3 1460.7,529.1 1462.8,531.6 1464.8,525.7 1467.2,525.5 1469.3,527.5 1470.9,528.7 1473.4,529.9 1475.0,533.2 1477.4,535.2 1479.9,535.2 1481.9,530.7 1483.6,532.8 1485.2,537.3 1489.7,534.4 1493.3,537.3 1498.6,538.5 1500.3,542.2 1503.1,544.2 1505.2,543.0 1506.8,538.1 1508.0,535.6 1508.8,526.3 1511.3,525.9 1513.3,521.4 1516.2,520.2 1519.0,521.0 1522.3,522.6 1525.5,521.0 1532.0,521.8 1533.7,508.7 1536.5,508.3 1539.0,520.2 1541.0,509.2 1543.1,509.2 1545.1,518.5 1546.7,511.6 1549.2,511.4 1551.2,508.3 1553.2,517.3 1556.5,515.7 1561.4,513.6 1564.6,511.2 1568.8,509.4 1569,585" fill="#432027"/><polyline points="1382.1,543.4 1384.5,543.0 1387.4,541.3 1389.0,538.9 1391.0,539.3 1392.7,550.3 1394.7,529.9 1396.3,529.0 1399.2,530.3 1401.2,528.7 1404.1,529.1 1405.7,532.0 1407.3,520.6 1409.8,520.2 1411.4,511.6 1413.0,510.8 1413.9,499.0 1416.3,499.0 1417.9,525.9 1419.2,527.1 1420.4,534.4 1425.3,534.4 1426.9,531.4 1428.9,531.2 1431.0,514.4 1432.6,516.9 1435.0,517.7 1437.5,519.3 1439.9,516.5 1442.0,516.9 1443.2,525.9 1445.6,529.1 1448.1,529.5 1450.1,525.9 1457.1,526.7 1458.3,528.3 1460.7,529.1 1462.8,531.6 1464.8,525.7 1467.2,525.5 1469.3,527.5 1470.9,528.7 1473.4,529.9 1475.0,533.2 1477.4,535.2 1479.9,535.2 1481.9,530.7 1483.6,532.8 1485.2,537.3 1489.7,534.4 1493.3,537.3 1498.6,538.5 1500.3,542.2 1503.1,544.2 1505.2,543.0 1506.8,538.1 1508.0,535.6 1508.8,526.3 1511.3,525.9 1513.3,521.4 1516.2,520.2 1519.0,521.0 1522.3,522.6 1525.5,521.0 1532.0,521.8 1533.7,508.7 1536.5,508.3 1539.0,520.2 1541.0,509.2 1543.1,509.2 1545.1,518.5 1546.7,511.6 1549.2,511.4 1551.2,508.3 1553.2,517.3 1556.5,515.7 1561.4,513.6 1564.6,511.2 1568.8,509.4" fill="none" stroke="#f2495c" stroke-width="1.2" stroke-linejoin="round"/><polygon points="1575,585 1575.2,562.3 1575.8,568.2 1580.1,568.5 1583.5,570.1 1590.3,571.6 1592.0,584.2 1595.9,583.3 1597.6,573.9 1601.0,570.9 1604.9,573.0 1606.6,558.3 1608.9,557.7 1610.8,563.9 1614.0,566.2 1617.9,568.7 1621.3,573.5 1623.9,578.4 1628.0,577.5 1629.7,571.8 1633.7,570.7 1637.0,572.4 1638.7,569.6 1642.7,567.5 1649.4,567.5 1652.3,569.6 1657.3,559.4 1660.1,559.4 1663.0,561.1 1666.3,561.5 1668.0,556.6 1672.5,558.3 1674.8,560.3 1676.5,555.8 1678.7,553.8 1681.0,540.8 1684.4,542.0 1687.2,545.7 1690.6,547.0 1692.3,543.7 1695.6,537.5 1697.9,537.5 1702.4,540.3 1706.3,541.2 1716.5,541.2 1718.5,537.5 1727.7,537.5 1731.1,540.5 1733.4,539.4 1742.4,538.9 1744.6,534.9 1747.5,546.1 1752.0,544.6 1757.0,543.7 1761.8,543.1 1762,585" fill="#283a2a"/><polyline points="1575.2,562.3 1575.8,568.2 1580.1,568.5 1583.5,570.1 1590.3,571.6 1592.0,584.2 1595.9,583.3 1597.6,573.9 1601.0,570.9 1604.9,573.0 1606.6,558.3 1608.9,557.7 1610.8,563.9 1614.0,566.2 1617.9,568.7 1621.3,573.5 1623.9,578.4 1628.0,577.5 1629.7,571.8 1633.7,570.7 1637.0,572.4 1638.7,569.6 1642.7,567.5 1649.4,567.5 1652.3,569.6 1657.3,559.4 1660.1,559.4 1663.0,561.1 1666.3,561.5 1668.0,556.6 1672.5,558.3 1674.8,560.3 1676.5,555.8 1678.7,553.8 1681.0,540.8 1684.4,542.0 1687.2,545.7 1690.6,547.0 1692.3,543.7 1695.6,537.5 1697.9,537.5 1702.4,540.3 1706.3,541.2 1716.5,541.2 1718.5,537.5 1727.7,537.5 1731.1,540.5 1733.4,539.4 1742.4,538.9 1744.6,534.9 1747.5,546.1 1752.0,544.6 1757.0,543.7 1761.8,543.1" fill="none" stroke="#73bf69" stroke-width="1.2" stroke-linejoin="round"/><polygon points="1188,850 1188.4,777.0 1196.0,776.2 1198.1,779.2 1202.3,779.2 1204.9,774.9 1206.5,776.2 1207.8,783.4 1211.6,783.4 1213.7,777.9 1215.4,777.0 1217.5,774.5 1221.3,774.5 1223.0,767.7 1225.1,767.3 1226.8,761.4 1231.5,761.4 1233.2,766.5 1234.9,767.3 1237.0,774.9 1240.4,775.4 1242.9,788.5 1244.2,788.5 1246.3,777.0 1249.6,777.0 1251.8,787.2 1255.1,785.1 1258.5,784.6 1262.7,784.2 1265.3,781.3 1269.5,781.3 1273.3,782.5 1275.0,787.6 1278.0,788.0 1281.3,791.0 1284.3,786.8 1287.7,786.8 1290.6,789.3 1294.0,790.4 1300.8,790.1 1305.0,791.4 1308.4,791.0 1312.6,788.0 1316.8,788.0 1319.8,790.4 1322.8,786.8 1326.1,786.8 1330.4,788.5 1335.1,788.5 1337.6,790.4 1341.4,791.4 1343.9,788.0 1345.6,787.2 1348.2,777.0 1349.9,777.5 1352.0,784.2 1354.5,785.5 1357.9,788.5 1361.3,790.6 1365.5,791.0 1371.4,793.5 1374.8,793.5 1377.3,795.6 1382.4,796.5 1386.6,798.6 1389.2,797.7 1393.4,797.7 1395.9,801.5 1398.9,797.3 1403.1,797.3 1405.2,801.1 1412.0,800.7 1415.4,792.7 1418.3,804.1 1421.3,804.9 1424.6,810.0 1428.0,805.8 1431.4,805.8 1433.9,809.2 1440.7,808.3 1443.2,805.8 1445.8,804.1 1449.2,800.3 1451.7,800.3 1454.2,799.0 1456.8,800.7 1460.1,800.7 1462.7,802.8 1466.1,800.3 1469.4,800.7 1473.7,802.4 1474,850" fill="#432027"/><polyline points="1188.4,777.0 1196.0,776.2 1198.1,779.2 1202.3,779.2 1204.9,774.9 1206.5,776.2 1207.8,783.4 1211.6,783.4 1213.7,777.9 1215.4,777.0 1217.5,774.5 1221.3,774.5 1223.0,767.7 1225.1,767.3 1226.8,761.4 1231.5,761.4 1233.2,766.5 1234.9,767.3 1237.0,774.9 1240.4,775.4 1242.9,788.5 1244.2,788.5 1246.3,777.0 1249.6,777.0 1251.8,787.2 1255.1,785.1 1258.5,784.6 1262.7,784.2 1265.3,781.3 1269.5,781.3 1273.3,782.5 1275.0,787.6 1278.0,788.0 1281.3,791.0 1284.3,786.8 1287.7,786.8 1290.6,789.3 1294.0,790.4 1300.8,790.1 1305.0,791.4 1308.4,791.0 1312.6,788.0 1316.8,788.0 1319.8,790.4 1322.8,786.8 1326.1,786.8 1330.4,788.5 1335.1,788.5 1337.6,790.4 1341.4,791.4 1343.9,788.0 1345.6,787.2 1348.2,777.0 1349.9,777.5 1352.0,784.2 1354.5,785.5 1357.9,788.5 1361.3,790.6 1365.5,791.0 1371.4,793.5 1374.8,793.5 1377.3,795.6 1382.4,796.5 1386.6,798.6 1389.2,797.7 1393.4,797.7 1395.9,801.5 1398.9,797.3 1403.1,797.3 1405.2,801.1 1412.0,800.7 1415.4,792.7 1418.3,804.1 1421.3,804.9 1424.6,810.0 1428.0,805.8 1431.4,805.8 1433.9,809.2 1440.7,808.3 1443.2,805.8 1445.8,804.1 1449.2,800.3 1451.7,800.3 1454.2,799.0 1456.8,800.7 1460.1,800.7 1462.7,802.8 1466.1,800.3 1469.4,800.7 1473.7,802.4" fill="none" stroke="#f2495c" stroke-width="1.2" stroke-linejoin="round"/><polygon points="1478,850 1478.2,822.5 1482.6,822.5 1485.6,824.2 1487.7,823.6 1496.1,823.6 1499.5,824.2 1503.7,824.6 1508.4,823.6 1511.3,823.8 1513.9,825.0 1520.6,824.2 1523.2,830.5 1524.4,830.5 1526.6,817.5 1530.4,817.5 1532.0,810.7 1535.8,808.2 1540.1,807.7 1542.2,804.4 1543.9,804.4 1546.0,807.3 1549.4,807.3 1551.9,805.2 1555.3,804.4 1559.5,803.5 1561.6,800.6 1562.9,800.6 1565.8,803.5 1568.8,803.5 1571.3,801.0 1573.0,801.4 1574.7,805.0 1577.7,805.0 1580.2,802.7 1591.6,803.1 1595.0,804.4 1598.4,804.8 1600.9,805.9 1606.0,806.7 1608.5,807.7 1612.3,808.6 1616.1,808.6 1618.7,805.4 1621.2,805.6 1625.1,806.0 1631.0,807.7 1633.5,812.4 1636.9,813.6 1640.3,813.2 1643.2,809.8 1647.0,810.7 1650.4,807.7 1653.8,807.7 1657.2,809.3 1663.9,810.7 1667.3,812.4 1670.7,813.6 1675.8,814.5 1683.4,814.5 1685.9,815.3 1692.7,815.2 1695.2,819.1 1699.4,817.9 1702.8,817.5 1708.7,812.4 1712.1,812.0 1714.2,806.5 1718.0,807.3 1721.4,807.3 1723.9,805.4 1725.6,805.4 1727.7,803.4 1734.9,803.4 1737.0,808.2 1740.0,809.4 1745.1,808.4 1752.7,807.9 1756.5,805.6 1759.4,805.2 1763.7,804.4 1764,850" fill="#283a2a"/><polyline points="1478.2,822.5 1482.6,822.5 1485.6,824.2 1487.7,823.6 1496.1,823.6 1499.5,824.2 1503.7,824.6 1508.4,823.6 1511.3,823.8 1513.9,825.0 1520.6,824.2 1523.2,830.5 1524.4,830.5 1526.6,817.5 1530.4,817.5 1532.0,810.7 1535.8,808.2 1540.1,807.7 1542.2,804.4 1543.9,804.4 1546.0,807.3 1549.4,807.3 1551.9,805.2 1555.3,804.4 1559.5,803.5 1561.6,800.6 1562.9,800.6 1565.8,803.5 1568.8,803.5 1571.3,801.0 1573.0,801.4 1574.7,805.0 1577.7,805.0 1580.2,802.7 1591.6,803.1 1595.0,804.4 1598.4,804.8 1600.9,805.9 1606.0,806.7 1608.5,807.7 1612.3,808.6 1616.1,808.6 1618.7,805.4 1621.2,805.6 1625.1,806.0 1631.0,807.7 1633.5,812.4 1636.9,813.6 1640.3,813.2 1643.2,809.8 1647.0,810.7 1650.4,807.7 1653.8,807.7 1657.2,809.3 1663.9,810.7 1667.3,812.4 1670.7,813.6 1675.8,814.5 1683.4,814.5 1685.9,815.3 1692.7,815.2 1695.2,819.1 1699.4,817.9 1702.8,817.5 1708.7,812.4 1712.1,812.0 1714.2,806.5 1718.0,807.3 1721.4,807.3 1723.9,805.4 1725.6,805.4 1727.7,803.4 1734.9,803.4 1737.0,808.2 1740.0,809.4 1745.1,808.4 1752.7,807.9 1756.5,805.6 1759.4,805.2 1763.7,804.4" fill="none" stroke="#73bf69" stroke-width="1.2" stroke-linejoin="round"/></svg>
<div class="t" style="left:1200.5px;top:334.9px;font-size:33px;color:#ccccdc;font-weight:400;letter-spacing:0px;">/beholder</div>
<div class="t" style="left:1393.5px;top:335.5px;font-size:33px;color:#ccccdc;font-weight:400;letter-spacing:0px;">/illithid</div>
<div class="t" style="left:1587.0px;top:335.5px;font-size:33px;color:#ccccdc;font-weight:400;letter-spacing:0px;">/manticore</div>
<div class="t" style="left:1200.5px;top:601.5px;font-size:33px;color:#ccccdc;font-weight:400;letter-spacing:0px;">/owlbear</div>
<div class="t" style="left:1490.0px;top:600.8px;font-size:33px;color:#ccccdc;font-weight:400;letter-spacing:0.5px;">/unicorn</div>
<div style="position:absolute;left:21px;top:624px;width:1150px;height:1px;background:#2c2e34"></div>
<div style="position:absolute;left:21px;top:660px;width:1150px;height:1px;background:#2c2e34"></div>
<div style="position:absolute;left:21px;top:696px;width:1150px;height:1px;background:#2c2e34"></div>
<div style="position:absolute;left:21px;top:732px;width:1150px;height:1px;background:#2c2e34"></div>
<div style="position:absolute;left:21px;top:768px;width:1150px;height:1px;background:#2c2e34"></div>
<div style="position:absolute;left:21px;top:804px;width:1150px;height:1px;background:#2c2e34"></div>
<div style="position:absolute;left:403px;top:625px;width:1px;height:210px;background:#2c2e34"></div>
<div style="position:absolute;left:786px;top:625px;width:1px;height:210px;background:#2c2e34"></div>
<div class="t" style="left:26.5px;top:602.0px;font-size:15.3px;color:#ccccdc;font-weight:400;letter-spacing:0px;-webkit-text-stroke:0.45px currentColor">http_status_code</div>
<div class="t" style="left:409.0px;top:602.3px;font-size:15px;color:#ccccdc;font-weight:400;letter-spacing:0px;-webkit-text-stroke:0.45px currentColor">http_target</div>
<div class="t" style="right:615.5px;top:602.3px;font-size:15px;color:#ccccdc;font-weight:400;letter-spacing:0px;-webkit-text-stroke:0.45px currentColor">Value</div>
<div class="t" style="left:26.5px;top:635.1px;font-size:15px;color:#6e9fff;font-weight:400;letter-spacing:1.5px;-webkit-text-stroke:0.3px currentColor">200</div>
<div class="t" style="left:409.5px;top:634.7px;font-size:15.5px;color:#6e9fff;font-weight:400;letter-spacing:0px;-webkit-text-stroke:0.3px currentColor">/beholder</div>
<div class="t" style="right:623.0px;top:635.1px;font-size:15px;color:#6e9fff;font-weight:400;letter-spacing:-0.8px;-webkit-text-stroke:0.3px currentColor">1413</div>
<div class="t" style="left:26.5px;top:671.1px;font-size:15px;color:#6e9fff;font-weight:400;letter-spacing:1.5px;-webkit-text-stroke:0.3px currentColor">200</div>
<div class="t" style="left:409.5px;top:670.7px;font-size:15.5px;color:#6e9fff;font-weight:400;letter-spacing:0px;-webkit-text-stroke:0.3px currentColor">/illithid</div>
<div class="t" style="right:623.0px;top:671.1px;font-size:15px;color:#6e9fff;font-weight:400;letter-spacing:-0.8px;-webkit-text-stroke:0.3px currentColor">1411</div>
<div class="t" style="left:26.5px;top:707.1px;font-size:15px;color:#6e9fff;font-weight:400;letter-spacing:1.5px;-webkit-text-stroke:0.3px currentColor">200</div>
<div class="t" style="left:409.5px;top:706.7px;font-size:15.5px;color:#6e9fff;font-weight:400;letter-spacing:0px;-webkit-text-stroke:0.3px currentColor">/manticore</div>
<div class="t" style="right:623.0px;top:707.1px;font-size:15px;color:#6e9fff;font-weight:400;letter-spacing:-0.8px;-webkit-text-stroke:0.3px currentColor">1290</div>
<div class="t" style="left:26.5px;top:743.1px;font-size:15px;color:#6e9fff;font-weight:400;letter-spacing:1.5px;-webkit-text-stroke:0.3px currentColor">200</div>
<div class="t" style="left:409.5px;top:742.7px;font-size:15.5px;color:#6e9fff;font-weight:400;letter-spacing:0px;-webkit-text-stroke:0.3px currentColor">/owlbear</div>
<div class="t" style="right:623.0px;top:743.1px;font-size:15px;color:#6e9fff;font-weight:400;letter-spacing:-0.8px;-webkit-text-stroke:0.3px currentColor">1444</div>
<div class="t" style="left:26.5px;top:779.1px;font-size:15px;color:#6e9fff;font-weight:400;letter-spacing:1.5px;-webkit-text-stroke:0.3px currentColor">200</div>
<div class="t" style="left:409.5px;top:778.7px;font-size:15.5px;color:#6e9fff;font-weight:400;letter-spacing:0px;-webkit-text-stroke:0.3px currentColor">/unicorn</div>
<div class="t" style="right:623.0px;top:779.1px;font-size:15px;color:#6e9fff;font-weight:400;letter-spacing:-0.8px;-webkit-text-stroke:0.3px currentColor">1490</div>
<div class="t" style="left:26.5px;top:815.1px;font-size:15px;color:#6e9fff;font-weight:400;letter-spacing:1.5px;-webkit-text-stroke:0.3px currentColor">201</div>
<div class="t" style="left:409.5px;top:814.7px;font-size:15.5px;color:#6e9fff;font-weight:400;letter-spacing:0px;-webkit-text-stroke:0.3px currentColor">/beholder</div>
<div class="t" style="right:623.0px;top:815.1px;font-size:15px;color:#6e9fff;font-weight:400;letter-spacing:-0.8px;-webkit-text-stroke:0.3px currentColor">1251</div>
</body></html>
